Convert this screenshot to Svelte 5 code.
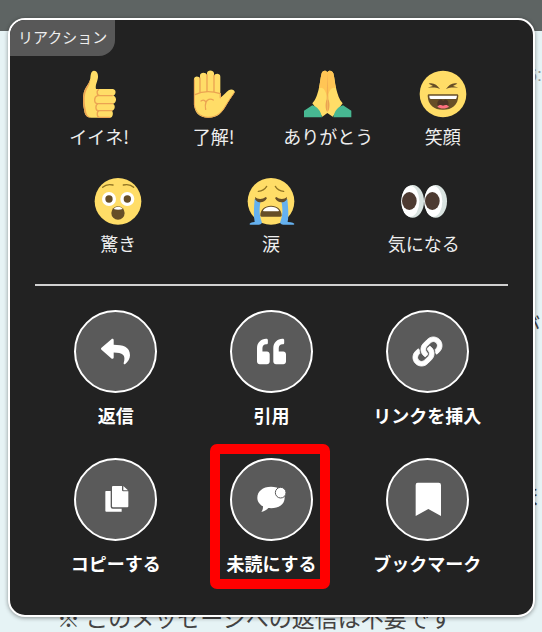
<script>
    const reactionRows = [
        [
            { icon: 'thumb', label: 'イイネ!' },
            { icon: 'hand', label: '了解!' },
            { icon: 'pray', label: 'ありがとう' },
            { icon: 'laugh', label: '笑顔' }
        ],
        [
            { icon: 'surprise', label: '驚き' },
            { icon: 'cry', label: '涙' },
            { icon: 'eyes', label: '気になる' }
        ]
    ];

    const actions = [
        { icon: 'reply', label: '返信' },
        { icon: 'quote', label: '引用' },
        { icon: 'link', label: 'リンクを挿入' },
        { icon: 'copy', label: 'コピーする' },
        { icon: 'unread', label: '未読にする', marked: true },
        { icon: 'bookmark', label: 'ブックマーク' }
    ];
</script>

<main>
    <header></header>
    <section class="chat">
        <p class="time">6:</p>
        <p class="line end">が</p>
        <p class="line end second">ま</p>
        <p class="line last">※ このメッセージへの返信は不要です</p>
    </section>

    <div class="popup" role="dialog" aria-labelledby="title">
        <h2 id="title">リアクション</h2>

        <div class="reactions">
            {#each reactionRows as row}
                <div class="row">
                    {#each row as reaction}
                        <button class="reaction">
                            <svg class="emoji" viewBox="0 0 144 144" aria-hidden="true">
                                {#if reaction.icon === 'thumb'}
                                    <path fill="#ffdd67" d="M57 2c9 0 13 9 12 20-1 13-9 23-6 35h49c13 0 12 17 3 20 11 3 11 21-1 24 8 4 7 18-3 21 5 6 3 21-6 21H49c-13 0-19-7-21-19-4-19-6-40-2-55 4-17 17-27 20-44 1-10 2-23 11-23z" />
                                    <path fill="#eba352" d="M46 26C43 43 29 52 26 69c-4 15-2 36 2 55 2 12 8 19 21 19-11-4-14-9-16-20-4-19-6-37-2-53 4-16 15-25 15-44z" />
                                    <path class="crease" d="M112 77H75c-10 0-11-15-4-18M113 101H68c-12 0-12-21 0-24M110 122H70c-9 0-10-17-1-21M104 142H74c-9 0-10-17-1-20" />
                                {:else if reaction.icon === 'hand'}
                                    <path fill="#ffdd67" d="M12 27c0-10 16-10 18-1V17c0-11 19-11 21-1v-6c0-11 20-11 21 0v8c2-9 19-9 19 2v63c10-7 18-17 25-22 9-6 22 0 17 8-9 13-15 22-23 35-13 23-26 39-55 39-29 0-42-16-43-42z" />
                                    <path class="crease" d="M30 24v43M51 14v51M72 16v49M15 74c20-10 50-11 76-3v12M33 93c8-5 12-2 15 4 3-8 12-13 22-7M48 97c-3 7-3 13-1 21" />
                                    <path fill="none" stroke="#eba352" stroke-width="3" d="M13 28v76c3 22 18 37 41 38 26 0 42-15 54-37 8-13 15-23 25-38" />
                                {:else if reaction.icon === 'pray'}
                                    <path fill="#ffdd67" d="M70 7c-3-7-15-7-17 3-4 15-5 31-9 48-4 15-8 31-19 42l30 40 15-11 16 11 30-40c-11-11-15-27-19-42-4-17-5-33-9-48-3-10-15-10-18-3z" />
                                    <path fill="#ffc555" d="M70 7c-3-7-15-7-17 3-4 15-5 31-8 45 12-7 20 7 25 27 5-20 13-34 26-27-4-14-4-30-8-45-3-10-15-10-18-3z" />
                                    <path fill="#eba352" d="M70 6v120c-7-7-6-29-2-38zM71 6v120c7-7 7-29 2-38z" />
                                    <path fill="#47b892" d="M0 122l25-16c15 4 26 17 29 36H0zM142 122l-25-16c-15 4-26 17-29 36h54z" />
                                {:else if reaction.icon === 'laugh'}
                                    <circle cx="72" cy="72" r="70" fill="#ffdd67" />
                                    <path fill="#664e27" d="M29 41c14-4 25 4 34 16-13-5-23-5-37-3 6-3 11-5 16-6-5-3-9-5-13-7zM115 41c-14-4-25 4-34 16 13-5 23-5 37-3-6-3-11-5-16-6 5-3 9-5 13-7z" />
                                    <path fill="#664e27" d="M26 77c0-3 2-4 5-4h82c3 0 5 1 5 4-1 28-19 42-46 42S27 105 26 77z" />
                                    <path fill="#fff" d="M31 77h83c-1 7-2 10-5 10H36c-4 0-5-4-5-10z" />
                                    <path fill="#4c3526" d="M59 91c5-4 10-3 13 2 4-5 9-6 13-2 6 7 4 18-2 20H61c-7-3-8-13-2-20z" />
                                    <path fill="#ff717f" d="M55 110c5-7 12-6 17-3 6-3 13-4 18 3-9 7-26 7-35 0z" />
                                {:else if reaction.icon === 'surprise'}
                                    <circle cx="72" cy="73" r="70" fill="#ffdd67" />
                                    <g fill="#fff"><circle cx="45" cy="66" r="21" /><circle cx="100" cy="66" r="21" /></g>
                                    <g fill="#664e27"><circle cx="45" cy="66" r="11" /><circle cx="100" cy="66" r="11" /><ellipse cx="72" cy="108" rx="20" ry="20" /></g>
                                    <path fill="#fff" d="M59 96c6-9 21-9 27 0-8 3-19 3-27 0z" />
                                    <path class="brow" d="M26 31c7-7 18-10 31-7M88 24c13-3 24 0 31 7" />
                                {:else if reaction.icon === 'cry'}
                                    <circle cx="72" cy="73" r="70" fill="#ffdd67" />
                                    <path fill="#65b1ef" d="M23 66h19c-5 24-7 46 2 68 3 5-3 9-9 9H10c-6-2 0-7 13-8-4-23-2-47 0-69zM121 66h-19c5 24 7 46-2 68-3 5 3 9 9 9h31c6-2 0-7-18-8 4-23 1-47-1-69z" />
                                    <path fill="#664e27" d="M24 60c8 8 23 8 32 0l4 3c-8 16-27 16-35 5zM120 60c-8 8-23 8-32 0l-4 3c8 16 27 16 35 5zM40 115c0-18 14-29 32-29s32 11 32 29c0 3-1 4-4 4H44c-3 0-4-1-4-4z" />
                                    <path fill="#fff" d="M49 99c10-13 36-13 46 0 2 2 0 4-3 4H52c-3 0-5-2-3-4z" />
                                    <path class="brow" d="M34 43c13-1 20-7 25-15M85 28c5 8 12 14 25 15" />
                                {:else}
                                    <g fill="#d9e3e0"><ellipse cx="38" cy="73" rx="34" ry="49" /><ellipse cx="107" cy="73" rx="34" ry="49" /></g>
                                    <g fill="#fff"><ellipse cx="31" cy="73" rx="27" ry="46" /><ellipse cx="100" cy="73" rx="27" ry="46" /></g>
                                    <g fill="#4d3a31"><ellipse cx="28" cy="72" rx="22" ry="27" /><ellipse cx="97" cy="72" rx="22" ry="27" /></g>
                                {/if}
                            </svg>
                            <span>{reaction.label}</span>
                        </button>
                    {/each}
                </div>
            {/each}
        </div>

        <hr>

        <div class="actions">
            {#each actions as action}
                <button class="action" class:marked={action.marked}>
                    <span class="circle">
                        {#if action.icon === 'reply'}
                            <svg viewBox="0 0 512 512" aria-hidden="true">
                                <path d="M8.309 189.836L184.313 37.851C199.719 24.546 224 35.347 224 56.015v80.053c160.629 1.839 288 34.032 288 186.258 0 61.441-39.581 122.309-83.333 154.132-13.653 9.931-33.111-2.533-28.077-18.631 45.344-145.012-21.507-183.51-176.59-185.742V360c0 20.7-24.3 31.453-39.687 18.164l-176.004-152c-11.071-9.562-11.086-26.753 0-36.328z" />
                            </svg>
                        {:else if action.icon === 'quote'}
                            <svg viewBox="0 0 512 512" aria-hidden="true">
                                <path d="M464 256h-80v-64c0-35.3 28.7-64 64-64h8c13.3 0 24-10.7 24-24V56c0-13.3-10.7-24-24-24h-8c-88.4 0-160 71.6-160 160v240c0 26.5 21.5 48 48 48h128c26.5 0 48-21.5 48-48V304c0-26.5-21.5-48-48-48zm-288 0H96v-64c0-35.3 28.7-64 64-64h8c13.3 0 24-10.7 24-24V56c0-13.3-10.7-24-24-24h-8C71.6 32 0 103.6 0 192v240c0 26.5 21.5 48 48 48h128c26.5 0 48-21.5 48-48V304c0-26.5-21.5-48-48-48z" />
                            </svg>
                        {:else if action.icon === 'link'}
                            <svg class="link" viewBox="0 0 512 512" aria-hidden="true">
                                <path d="M326.612 185.391c59.747 59.809 58.927 155.698.36 214.59-.11.12-.24.25-.36.37l-67.2 67.2c-59.27 59.27-155.699 59.262-214.96 0-59.27-59.26-59.27-155.7 0-214.96l37.106-37.106c9.84-9.84 26.786-3.3 27.294 10.606.648 17.722 3.826 35.527 9.69 52.721 1.986 5.822.567 12.262-3.783 16.612l-13.087 13.087c-28.026 28.026-28.905 73.66-1.155 101.96 28.024 28.579 74.086 28.749 102.325.51l67.2-67.19c28.191-28.191 28.073-73.757 0-101.83-3.701-3.694-7.429-6.564-10.341-8.569a16.037 16.037 0 0 1-6.947-12.606c-.396-10.567 3.348-21.456 11.698-29.806l21.054-21.055c5.521-5.521 14.182-6.199 20.584-1.731a152.482 152.482 0 0 1 20.522 17.197zM467.547 44.449c-59.261-59.262-155.69-59.27-214.96 0l-67.2 67.2c-.12.12-.25.25-.36.37-58.566 58.892-59.387 154.781.36 214.59a152.454 152.454 0 0 0 20.521 17.196c6.402 4.468 15.064 3.789 20.584-1.731l21.054-21.055c8.35-8.35 12.094-19.239 11.698-29.806a16.037 16.037 0 0 0-6.947-12.606c-2.912-2.005-6.64-4.875-10.341-8.569-28.073-28.073-28.191-73.639 0-101.83l67.2-67.19c28.239-28.239 74.3-28.069 102.325.51 27.75 28.3 26.872 73.934-1.155 101.96l-13.087 13.087c-4.35 4.35-5.769 10.79-3.783 16.612 5.864 17.194 9.042 34.999 9.69 52.721.509 13.906 17.454 20.446 27.294 10.606l37.106-37.106c59.271-59.259 59.271-155.699.001-214.959z" />
                            </svg>
                        {:else if action.icon === 'copy'}
                            <svg viewBox="0 0 87 87" aria-hidden="true">
                                <path d="M36 3h27v12q0 4 4 4h15v45q0 3-3 3H36q-3 0-3-3V6q0-3 3-3zM67 3l14 13H67zM15 18h14v47q0 6 6 6h27v9H16q-3 0-3-3V20q0-2 2-2z" />
                            </svg>
                        {:else if action.icon === 'unread'}
                            <svg viewBox="0 0 87 87" aria-hidden="true">
                                <path d="M42 5C17 5 1 19 1 38c0 12 7 20 17 26 0 7-1 12-5 17 10-2 17-7 21-12 27 3 49-9 49-31C83 19 67 5 42 5z" />
                                <circle class="dot" cx="71" cy="23" r="16" />
                            </svg>
                        {:else}
                            <svg viewBox="0 0 87 87" aria-hidden="true">
                                <path d="M14-7h63q7 0 7 7v93L46 72 8 93V0q0-7 6-7z" />
                            </svg>
                        {/if}
                    </span>
                    <span>{action.label}</span>
                </button>
            {/each}
        </div>
    </div>
</main>

<style>
    :global(body) {
        margin: 0;
    }
    main {
        position: relative;
        min-height: 100vh;
        overflow: hidden;
        background: #e6f3f5;
        font-family: "Noto Sans CJK JP", sans-serif;
    }
    header {
        height: 31px;
        background: #5e6463;
    }
    .chat {
        display: flex;
        flex-direction: column;
    }
    p {
        margin: 0;
        white-space: nowrap;
    }
    .time {
        margin-top: 32px;
        font-family: "Liberation Sans", sans-serif;
        font-size: 18px;
        line-height: 24px;
        text-align: right;
        color: #999;
    }
    .line {
        margin-top: 224px;
        padding: 0 2px 0 57px;
        font-size: 23px;
        line-height: 28px;
        color: #444;
    }
    .end {
        text-align: right;
    }
    .second {
        margin-top: 142px;
    }
    .last {
        margin-top: 94px;
    }
    .popup {
        position: absolute;
        top: 18px;
        left: 8px;
        right: 7px;
        overflow: hidden;
        border: 2px solid #fff;
        border-radius: 17px;
        background: #222;
        box-shadow: 0 1px 4px rgba(0, 0, 0, 0.4);
    }
    h2 {
        width: fit-content;
        margin: 0;
        padding: 0 8px 2px;
        border-bottom-right-radius: 16px;
        background: #585858;
        color: #eee;
        font-size: 15px;
        font-weight: 400;
        line-height: 34px;
    }
    button {
        display: flex;
        flex-direction: column;
        align-items: center;
        padding: 0;
        border: 0;
        background: none;
        color: #eee;
        font-family: inherit;
        font-size: 18px;
        line-height: 24px;
        white-space: nowrap;
        cursor: pointer;
    }
    .reactions {
        display: flex;
        flex-direction: column;
        gap: 29px;
        padding: 14px 33px 29px 32px;
    }
    .row {
        display: flex;
    }
    .reaction {
        flex: 1 1 0;
        gap: 6px;
    }
    .emoji {
        width: 48px;
        height: 48px;
    }
    .crease {
        fill: none;
        stroke: #eba352;
        stroke-width: 4;
        stroke-linecap: round;
    }
    .brow {
        fill: none;
        stroke: #917524;
        stroke-width: 4;
        stroke-linecap: round;
    }
    hr {
        height: 2px;
        margin: 0 25px;
        border: 0;
        background: #d0d0d0;
    }
    .actions {
        display: grid;
        grid-template-columns: repeat(3, 1fr);
        row-gap: 31px;
        padding: 24px 28px 40px;
    }
    .action {
        position: relative;
        gap: 10px;
        color: #fff;
        font-weight: 700;
    }
    .circle {
        display: flex;
        align-items: center;
        justify-content: center;
        box-sizing: border-box;
        width: 83px;
        height: 83px;
        border: 2px solid #fff;
        border-radius: 50%;
        background: #5a5a5a;
    }
    .circle svg {
        width: 29px;
        height: 29px;
        overflow: visible;
        fill: #fff;
    }
    .circle .link {
        stroke: #fff;
        stroke-width: 16;
    }
    .dot {
        stroke: #5a5a5a;
        stroke-width: 3;
    }
    .marked::after {
        content: "";
        position: absolute;
        inset: -14px 19px -14px 16px;
        border: 10px solid #f00;
        border-radius: 7px;
    }
</style>
